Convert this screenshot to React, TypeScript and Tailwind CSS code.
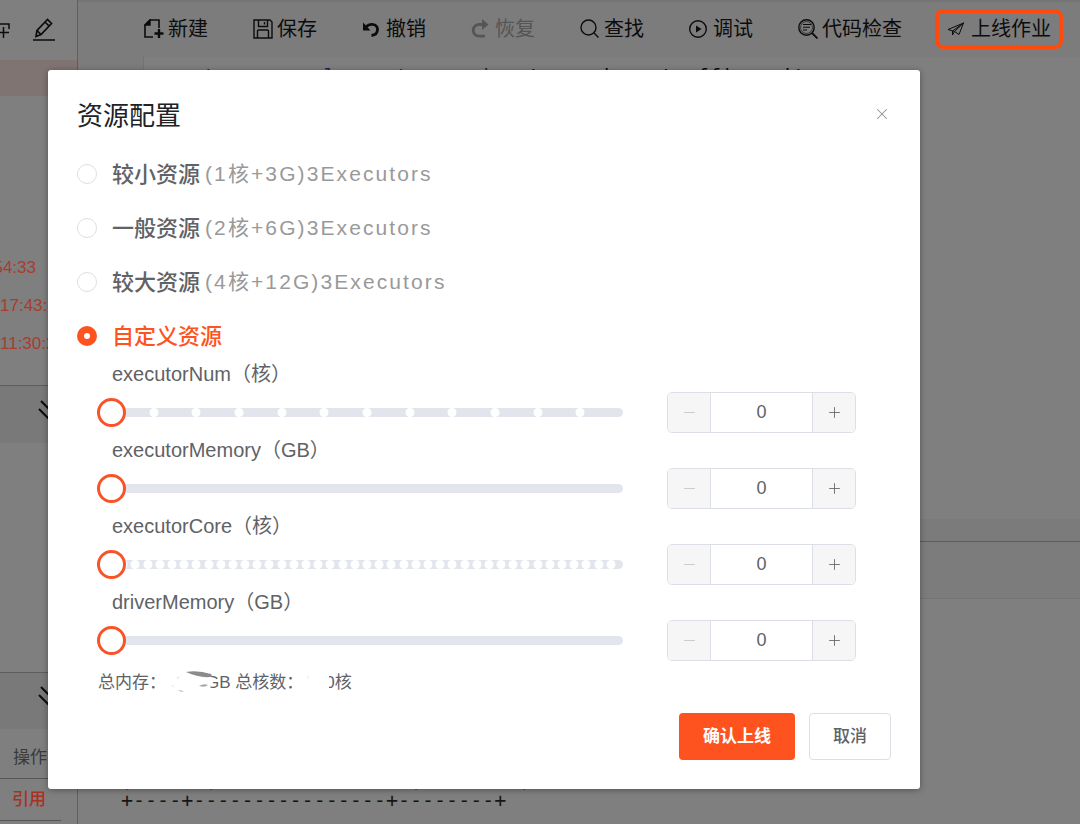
import { ReactNode, useState } from 'react';
import { X, Minus, Plus } from 'lucide-react';

interface ToolButtonProps {
  label: string;
  icon: ReactNode;
  disabled?: boolean;
  highlighted?: boolean;
}

const ToolButton = ({ label, icon, disabled = false, highlighted = false }: ToolButtonProps) => (
  <button
    type="button"
    disabled={disabled}
    className={`relative flex items-center gap-1 whitespace-nowrap text-[20px] leading-7 ${
      disabled ? 'text-[#555555]' : 'text-[#0c0c0c]'
    }`}
  >
    <svg className="size-5 shrink-0" viewBox="0 0 20 20" fill="none" stroke="currentColor" strokeWidth={1.4} aria-hidden="true">
      {icon}
    </svg>
    {label}
    {highlighted && (
      <span className="absolute -inset-x-3 -inset-y-1.5 rounded-lg border-4 border-[#ff4a0d]" />
    )}
  </button>
);

const tools: ToolButtonProps[] = [
  {
    label: '新建',
    icon: (
      <>
        <path d="M15 9V1H6L1 6v12h8" strokeWidth={1.6} />
        <path d="M6 1v5H1z" fill="currentColor" />
        <path d="M15 10v9M10.500 14.500h9" strokeWidth={2.4} />
      </>
    ),
  },
  {
    label: '保存',
    icon: (
      <>
        <path d="M1 1h16l2 2v16H1z" />
        <path d="M5.500 1v6.500h9V1M11.500 3v2.500M4.500 19v-7q0-1 1-1h9q1 0 1 1v7" />
      </>
    ),
  },
  {
    label: '撤销',
    icon: (
      <>
        <path d="M4 8C8 3.500 15.500 5 15.500 10.500c0 3.500-2 5.500-6 6" strokeWidth={2.8} />
        <path d="M1 3.500v8h7.500z" fill="currentColor" stroke="none" />
      </>
    ),
  },
  {
    label: '恢复',
    disabled: true,
    icon: (
      <>
        <path d="M12 5.500H8a5.800 5.800 0 0 0 0 11.600h6" strokeWidth={2.8} />
        <path d="M11 0l6.500 5.500L11 11z" fill="currentColor" stroke="none" />
      </>
    ),
  },
  {
    label: '查找',
    icon: (
      <>
        <circle cx="8.500" cy="8.500" r="7.500" />
        <path d="M14 14l4.500 4.500" />
      </>
    ),
  },
  {
    label: '调试',
    icon: (
      <>
        <circle cx="9" cy="10" r="8.300" />
        <path d="M7 6.500l5.500 3.500L7 13.500z" fill="currentColor" stroke="none" />
      </>
    ),
  },
  {
    label: '代码检查',
    icon: (
      <>
        <circle cx="8.500" cy="8.500" r="7.700" />
        <circle cx="8.500" cy="8.500" r="6" strokeWidth={0.6} />
        <path d="M14 14l5.500 5.500" strokeWidth={1.8} />
        <path d="M5 5.500h8M5 8.300h7M5 11h4" strokeWidth={1.1} />
      </>
    ),
  },
  {
    label: '上线作业',
    highlighted: true,
    icon: (
      <path d="M1 10.500L16.500 4l-4.500 11.500-4.500-3zM16.500 4L5.500 12v4l2-3.500L16.500 4" strokeWidth={1} strokeLinejoin="round" />
    ),
  },
];

const DoubleChevron = () => (
  <svg className="ml-[38px] h-6 w-7" viewBox="0 0 28 24" fill="none" stroke="#0c0c0c" strokeWidth={2} aria-hidden="true">
    <path d="M3 2l10 10L23 2M1 10l12 12L25 10" />
  </svg>
);

const Sidebar = () => (
  <aside className="flex w-[78px] shrink-0 flex-col overflow-hidden border-r border-[#5f5f5f]">
    <div className="flex h-[60px] shrink-0 items-center gap-5">
      <svg className="h-6 w-3" viewBox="0 0 12 24" fill="none" stroke="#0c0c0c" strokeWidth={1.5} aria-hidden="true">
        <path d="M0 6h9v5M0 14.500h9M3.500 9v11" />
      </svg>
      <svg className="size-6" viewBox="0 0 24 24" fill="none" stroke="#0c0c0c" strokeWidth={1.7} aria-hidden="true">
        <path d="M1 22h22M4 18.500l1-6L15.500 1.500l4 4L9 16.500zM13 4l4 4M5 12.500l4 4" />
      </svg>
    </div>
    <div className="h-9 shrink-0 bg-[#7f7471]" />
    <ul className="mt-[153px] shrink-0 text-[17px] leading-[38px] text-[#a83d2e]">
      <li className="flex w-9 justify-end">54:33</li>
      <li>17:43:52</li>
      <li>11:30:26</li>
    </ul>
    <div className="mt-[22px] flex h-[58px] shrink-0 items-center border-t border-[#5c5c5c] bg-[#797979] pb-2">
      <DoubleChevron />
    </div>
    <div className="flex-1" />
    <div className="flex h-[57px] shrink-0 items-center border-t border-[#5c5c5c] bg-[#797979] pb-2">
      <DoubleChevron />
    </div>
    <div className="flex h-[50px] shrink-0 items-center whitespace-nowrap border-b border-[#565656] pl-[13px] pt-2 text-[17px] text-[#3a3a3a]">
      操作
    </div>
    <div className="mb-[3px] mr-4 flex h-[42px] shrink-0 items-center border-b border-[#565656] pl-3">
      <a href="#" className="text-[17px] font-medium text-[#a8311f]">引用</a>
    </div>
  </aside>
);

const Workspace = () => (
  <main className="flex min-w-0 flex-1 flex-col overflow-hidden">
    <div className="flex h-[57px] shrink-0 items-center gap-[45px] border-t-2 border-[#757575] bg-[#7c7c7c] pb-0.5 pl-[66px]">
      {tools.map((tool) => (
        <ToolButton key={tool.label} {...tool} />
      ))}
    </div>
    <div className="flex flex-1 overflow-hidden">
      <div className="w-[66px] shrink-0 border-r border-[#737373] bg-[#7c7c7c]" />
      <pre className="pl-[11px] pt-[7px] font-['DejaVu_Sans_Mono',monospace] text-[20px] leading-6 text-[#0c0c0c]">
        <span className="text-[#25215c]">create source_legs at scanning</span> to  using  traffic_unit
      </pre>
    </div>
    <div className="h-[22px] shrink-0 bg-[#7b7b7b]" />
    <div className="h-[58px] shrink-0 border-y border-t-[#5c5c5c] border-b-[#737373] bg-[#7c7c7c]" />
    <pre className="flex h-[225px] shrink-0 flex-col justify-end pb-[13px] pl-[43px] font-['DejaVu_Sans_Mono',monospace] text-[20px] leading-[22px] text-[#161616]">
      <span>{'|      |                |        |'}</span>
      <span>+----+----------------+--------+</span>
    </pre>
  </main>
);

const presets = [
  { id: 'small', label: '较小资源', hint: '(1核+3G)3Executors' },
  { id: 'normal', label: '一般资源', hint: '(2核+6G)3Executors' },
  { id: 'large', label: '较大资源', hint: '(4核+12G)3Executors' },
  { id: 'custom', label: '自定义资源', hint: '' },
];

interface ResourceField {
  id: string;
  label: string;
  max: number;
  showStops?: boolean;
}

const fields: ResourceField[] = [
  { id: 'executorNum', label: 'executorNum（核）', max: 12, showStops: true },
  { id: 'executorMemory', label: 'executorMemory（GB）', max: 64 },
  { id: 'executorCore', label: 'executorCore（核）', max: 42, showStops: true },
  { id: 'driverMemory', label: 'driverMemory（GB）', max: 64 },
];

const ResourceRow = ({ id, label, max, showStops = false }: ResourceField) => {
  const [value, setValue] = useState(0);

  const update = (next: number) => {
    setValue(Math.min(max, Math.max(0, next || 0)));
  };

  return (
    <div>
      <label htmlFor={id} className="ml-[35px] block h-[35px] text-[20px] leading-[35px] text-[#606266]">
        {label}
      </label>
      <div className="ml-5 mr-[35px] flex items-center gap-[30px]">
        <div className="relative h-[29px] flex-1">
          <div className="absolute inset-x-3.5 top-2.5 h-[9px] rounded-full bg-[#e2e5ec]">
            {showStops &&
              Array.from({ length: max - 1 }, (_, i) => (
                <span
                  key={i}
                  className="absolute size-[9px] -translate-x-1/2 rounded-full bg-white"
                  style={{ left: `${((i + 1) * 100) / max}%` }}
                />
              ))}
          </div>
          <input
            id={id}
            type="range"
            min={0}
            max={max}
            value={value}
            onChange={(e) => update(Number(e.target.value))}
            className="absolute inset-0 m-0 h-full w-full cursor-pointer appearance-none bg-transparent [&::-webkit-slider-thumb]:size-[29px] [&::-webkit-slider-thumb]:appearance-none [&::-webkit-slider-thumb]:rounded-full [&::-webkit-slider-thumb]:border-3 [&::-webkit-slider-thumb]:border-solid [&::-webkit-slider-thumb]:border-[#f9532a] [&::-webkit-slider-thumb]:bg-white"
          />
        </div>
        <div className="flex h-[41px] w-[189px] overflow-hidden rounded-[5px] border border-[#dcdfe6]">
          <button
            type="button"
            aria-label="减少"
            disabled={value === 0}
            onClick={() => update(value - 1)}
            className="flex w-[42px] items-center justify-center bg-[#f6f6f7] text-[#606266] disabled:text-[#c0c4cc]"
          >
            <Minus size={17} strokeWidth={1.2} />
          </button>
          <input
            type="text"
            inputMode="numeric"
            aria-label={label}
            value={value}
            onChange={(e) => update(Number(e.target.value))}
            className="w-0 flex-1 border-x border-[#dcdfe6] bg-white text-center text-[18px] text-[#606266] outline-none"
          />
          <button
            type="button"
            aria-label="增加"
            onClick={() => update(value + 1)}
            className="flex w-[42px] items-center justify-center bg-[#f6f6f7] text-[#606266]"
          >
            <Plus size={17} strokeWidth={1.2} />
          </button>
        </div>
      </div>
    </div>
  );
};

const Summary = () => (
  <div className="ml-[21px] mt-2 flex h-7 items-center whitespace-nowrap text-[17px] text-[#606266]">
    <span>总内存：</span>
    <span className="relative h-7 w-10">
      {/* smudge over the memory figure */}
      <svg className="absolute left-0 top-0 h-7 w-[50px]" viewBox="0 0 50 28" aria-hidden="true">
        <path d="M38 8h8q-3 6-1 8l-1 4h-6z" fill="#ffffff" />
        <path d="M20 3Q32 1 45 5q2 2-1 3-11 1-24-5z" fill="#8b8b8b" />
        <path d="M33 17q5-3 9-1-3 3-9 1z" fill="#a8a8a8" />
        <path d="M12 21q4 0 6 2-4 0-6-2z" fill="#b5b5b5" />
        <path d="M5 17l3-1-1 2zM10 9l4-2-2 3z" fill="#e4e4e4" />
      </svg>
    </span>
    <span className="whitespace-pre">GB 总核数：</span>
    <span className="relative h-7 w-[22px]">
      <svg className="absolute left-0 top-0 h-7 w-[28px]" viewBox="0 0 28 28" aria-hidden="true">
        <path d="M20 4h6v20h-6z" fill="#ffffff" />
        <path d="M4 8l3-1-2 3z" fill="#ececec" />
      </svg>
    </span>
    <span>0核</span>
  </div>
);

const ResourceDialog = () => {
  const [selected, setSelected] = useState('custom');

  return (
    <div
      role="dialog"
      aria-labelledby="dialog-title"
      className="w-full rounded-[3px] bg-white px-[29px] pb-[29px] pt-6 shadow-[0_1px_6px_rgba(0,0,0,0.35)]"
    >
      <header className="flex items-center justify-between">
        <h2 id="dialog-title" className="text-[26px] leading-[44px] text-[#202226]">资源配置</h2>
        <button type="button" aria-label="关闭" className="pb-1 text-[#8f9298]">
          <X size={18} strokeWidth={1.4} />
        </button>
      </header>
      <fieldset className="mt-[9px]">
        {presets.map(({ id, label, hint }) => (
          <label key={id} className="flex h-[54px] items-center">
            <input
              type="radio"
              name="preset"
              value={id}
              checked={selected === id}
              onChange={() => setSelected(id)}
              className="m-0 size-5 shrink-0 appearance-none rounded-full border border-[#dcdfe6] bg-white checked:border-[7px] checked:border-[#ff531f]"
            />
            <span
              className={`ml-[15px] text-[22px] font-medium ${
                selected === id ? 'text-[#ff531f]' : 'text-[#606266]'
              }`}
            >
              {label}
            </span>
            {hint && <span className="ml-[5px] text-[21px] tracking-widest text-[#999999]">{hint}</span>}
          </label>
        ))}
      </fieldset>
      <div className="-mt-1.5">
        {fields.map((field) => (
          <ResourceRow key={field.id} {...field} />
        ))}
      </div>
      <Summary />
      <footer className="mt-4 flex justify-end gap-3.5">
        <button type="button" className="h-[47px] rounded-[4px] bg-[#ff531f] px-6 text-[17px] font-bold text-white">
          确认上线
        </button>
        <button type="button" className="h-[47px] rounded-[4px] border border-[#dcdfe6] bg-white px-[23px] text-[17px] font-medium text-[#606266]">
          取消
        </button>
      </footer>
    </div>
  );
};

export default function App() {
  return (
    <div className="relative flex h-screen overflow-hidden bg-[#7f7f7f] font-['Liberation_Sans','Noto_Sans_CJK_SC',sans-serif]">
      <Sidebar />
      <Workspace />
      <div className="absolute inset-x-0 top-0 pl-12 pr-40 pt-[70px]">
        <ResourceDialog />
      </div>
    </div>
  );
}
